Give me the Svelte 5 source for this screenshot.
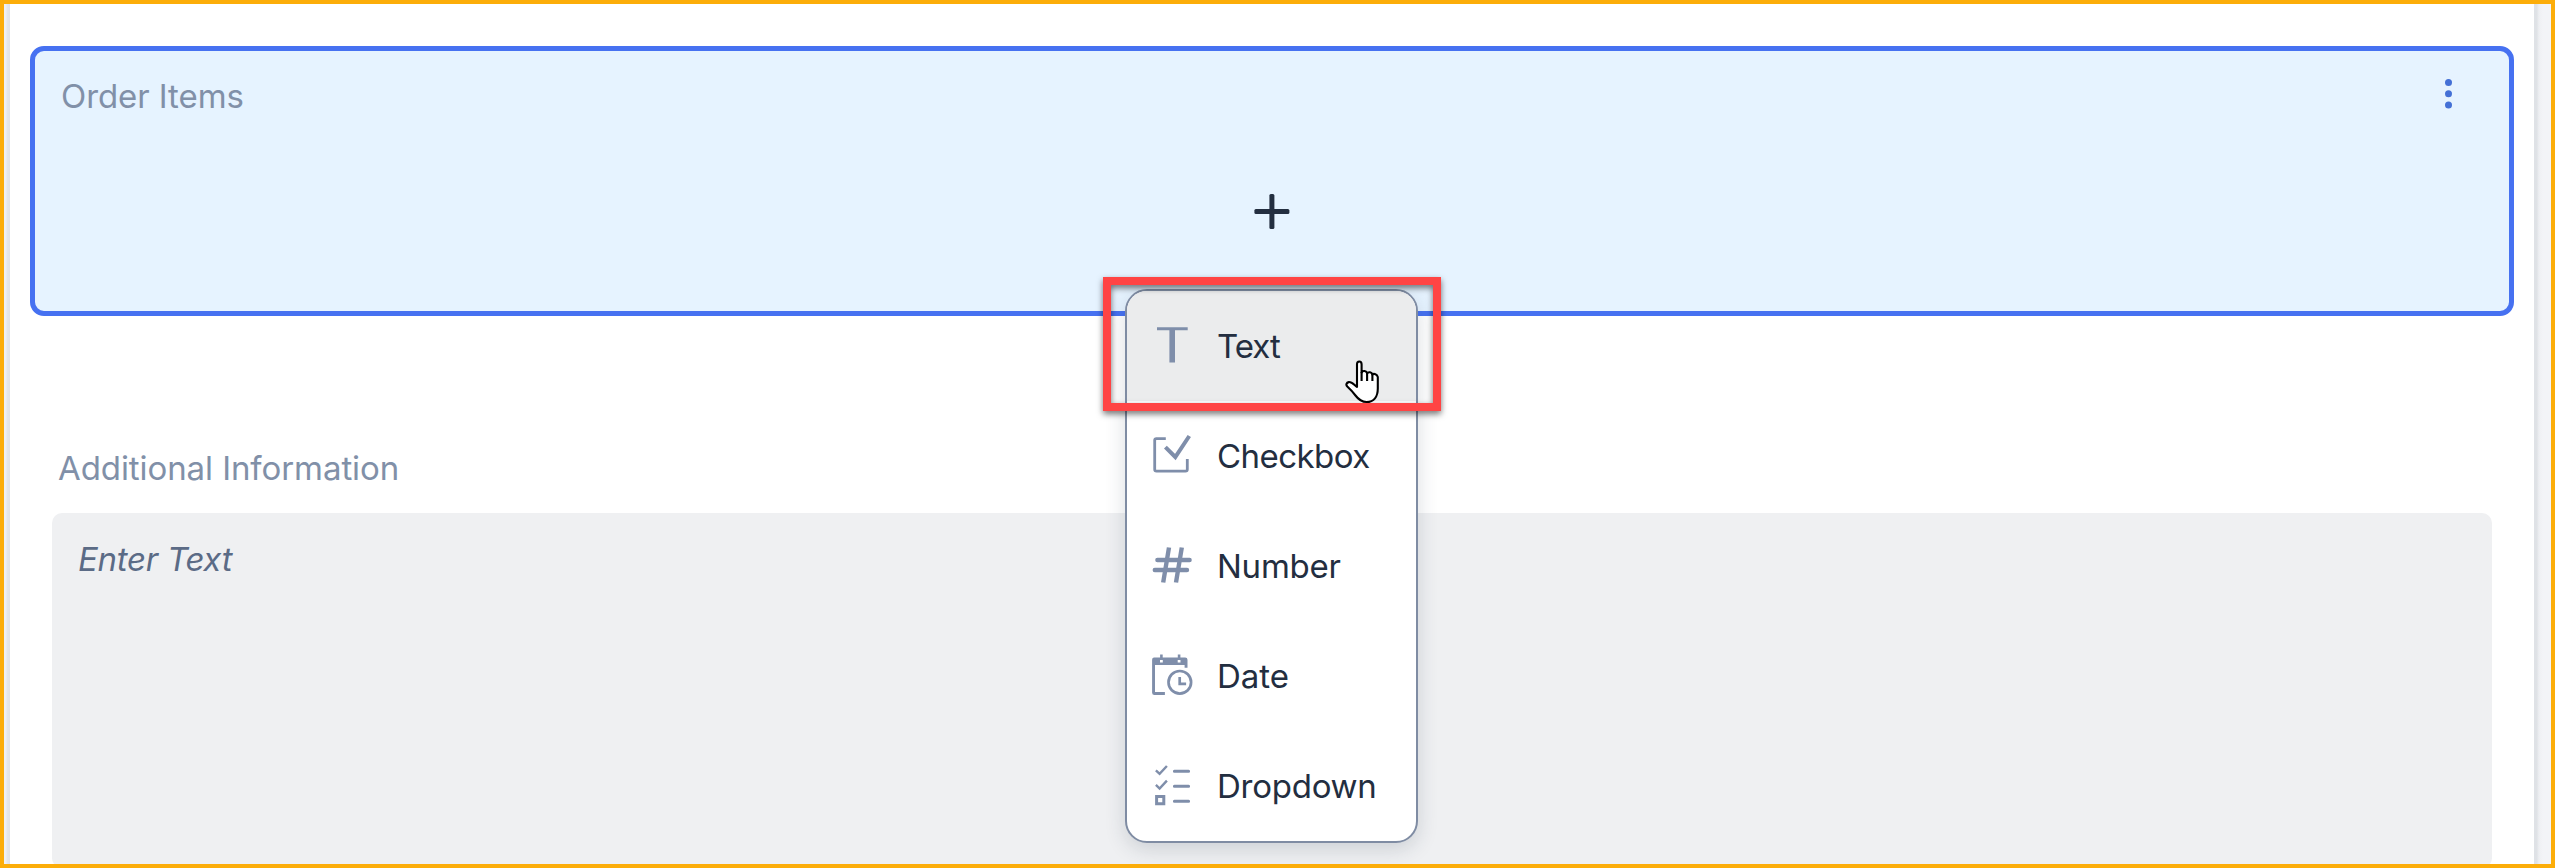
<script>
  const options = [
    { id: 'text', label: 'Text', spacing: -1, active: true },
    { id: 'checkbox', label: 'Checkbox', spacing: -0.55 },
    { id: 'number', label: 'Number', spacing: -0.25 },
    { id: 'date', label: 'Date', spacing: 0 },
    { id: 'dropdown', label: 'Dropdown', spacing: -0.25 }
  ];
</script>

<div class="frame">
  <div class="gutter left"></div>
  <main class="page">
    <section class="card">
      <header>
        <span class="title">Order Items</span>
        <svg class="dots" viewBox="0 0 8 30" aria-hidden="true">
          <circle cx="4.5" cy="3.5" r="3.5" /><circle cx="4.5" cy="14.8" r="3.5" /><circle cx="4.5" cy="26" r="3.5" />
        </svg>
      </header>
      <svg class="plus" viewBox="0 0 36 35" aria-hidden="true">
        <rect x="15.4" y="0" width="5" height="35" rx="1.5" /><rect x="0.4" y="15" width="35" height="5" rx="1.5" />
      </svg>
    </section>
    <section class="info">
      <div class="label">Additional Information</div>
      <div class="area">Enter Text</div>
    </section>
  </main>
  <div class="gutter right"></div>

  <ul class="menu">
    {#each options as o (o.id)}
      <li class:active={o.active}>
        <svg class="icon" viewBox="0 0 44 44" aria-hidden="true">
          {#if o.id === 'text'}
            <path class="fill" d="M7 5.3h30.7v3H25v32.2h-5.6V8.3H7z" />
          {:else if o.id === 'checkbox'}
            <path class="line" stroke-width="2.8" d="M15.8 6.6H6.4Q4.7 6.6 4.7 8.3V37.2Q4.7 39.1 6.5 39.1H35.5Q37.3 39.1 37.3 37.2V27" />
            <path class="line" stroke-width="4" d="M15.4 15.2L25.3 25L39.3 4" />
          {:else if o.id === 'number'}
            <g class="line" stroke-width="4.4">
              <path d="M19 5.5L13.2 40.5M31.8 5.5L26 40.5" />
              <path stroke-linecap="round" d="M7.4 18H39.6M4.8 28H37" />
            </g>
          {:else if o.id === 'date'}
            <g transform="translate(-2.9 -2.3)">
              <path class="fill" d="M7 7.7H13V4.9H15.6V7.7H30.7V4.9H33.3V7.7H38Q40.4 7.7 40.4 10V18H37.5V15.2H7.9V42.4H17.8V45.4H7.4Q5 45.4 5 43V10Q5 7.7 7 7.7ZM12.9 10.4V12.8H15.7V10.4ZM30.6 10.4V12.8H33.4V10.4Z" fill-rule="evenodd" />
              <circle class="line" cx="32.7" cy="32.6" r="11.3" stroke-width="2.7" />
              <path class="line" stroke-width="2.7" d="M32.6 27.4V34.2H39" />
            </g>
          {:else}
            <g transform="translate(-2.6 -1.2)">
              <path class="line" stroke-width="2.4" d="M8.5 9.5L12.2 13.1L19.5 5.2M8.5 24.1L12.2 27.7L19.5 19.8" />
              <path class="line" stroke-width="3" d="M9.2 35.8H16.4V43H9.2Z" />
              <path class="line" stroke-width="3" stroke-linecap="round" d="M27 10.5H41.2M27 25.4H41.2M27 40.4H41.2" />
            </g>
          {/if}
        </svg>
        <span style="letter-spacing: {o.spacing}px">{o.label}</span>
      </li>
    {/each}
  </ul>

  <div class="highlight"></div>
  <svg class="cursor" viewBox="0 0 36 44" aria-hidden="true">
    <path d="M12 27V4.4Q12 1.5 14.3 1.5T16.6 4.4V12.6Q17.5 10.6 19.6 11T22.1 13.4Q23 11.9 25 12.3T27.4 14.6Q28.6 13.5 30.4 14.2T32.8 17V28.5C32.8 36.5 29 42 21.5 42C16 42 13.5 39.5 10.5 35.5C7.5 31.5 5 29 2.3 26.5C.6 24.8 1.4 22.6 3.8 22.1C6.8 21.7 9 24.8 12 27Z" />
    <path d="M16.6 12V21M22.1 13V21M27.4 14V21" />
  </svg>
</div>

<style>
  :global(body) { margin: 0; }
  .frame {
    position: relative;
    display: flex;
    box-sizing: border-box;
    width: 2555px;
    height: 868px;
    border: 4px solid #fcad09;
    overflow: hidden;
    background: #fff;
    font: 400 33px/40px Inter, "Liberation Sans", sans-serif;
    white-space: nowrap;
  }
  .gutter { flex: none; }
  .left { width: 6px; background: linear-gradient(90deg, #eff0f3 0 2px, #e5e7eb 3px, #e1e3e7 6px); }
  .right { width: 17px; background: linear-gradient(90deg, #dfe2e6 0 3px, #e9ebee 4px, #f0f1f4 6px, #f3f4f7 9px); }
  .page { flex: 1; min-width: 0; padding: 42px 20px 0; box-sizing: border-box; }
  .card {
    box-sizing: border-box;
    height: 270px;
    padding: 25px 57px 0 26px;
    border: 5px solid #4671f1;
    border-radius: 14px;
    background: #e6f3ff;
    display: flex;
    flex-direction: column;
  }
  header { display: flex; justify-content: space-between; align-items: flex-start; height: 118px; }
  .title { color: #8190a8; letter-spacing: -0.07px; }
  .dots { width: 8px; height: 30px; margin-top: 3px; fill: #4470d6; }
  .plus { width: 36px; height: 35px; margin-left: 1193px; fill: #232e40; }
  .info { padding: 132px 22px 0; }
  .label { padding-left: 6px; color: #8190a8; letter-spacing: -0.08px; }
  .area {
    height: 329px;
    margin-top: 25px;
    padding: 26px 26px 0;
    border-radius: 10px;
    background: #eff0f2;
    color: #5b6b86;
    font-style: italic;
    letter-spacing: -0.28px;
  }
  .menu {
    position: absolute;
    left: 1121px;
    top: 285px;
    box-sizing: border-box;
    width: 293px;
    height: 554px;
    margin: 0;
    padding: 0;
    list-style: none;
    border: 2px solid #7f8ca3;
    border-radius: 22px;
    overflow: hidden;
    background: #fff;
    box-shadow: 0 6px 20px rgba(34, 53, 72, 0.17);
  }
  li { display: flex; align-items: center; gap: 23px; height: 110px; padding-left: 23px; color: #232e40; }
  .active { background: #ebeced; }
  .icon { width: 44px; height: 44px; overflow: visible; margin-top: -5px; }
  .fill { fill: #7f8eaa; }
  .line { fill: none; stroke: #7f8eaa; }
  .highlight {
    position: absolute;
    left: 1099px;
    top: 273px;
    box-sizing: border-box;
    width: 338px;
    height: 134px;
    border: 8px solid #ff4444;
    filter: drop-shadow(0 3px 3px rgba(0, 0, 0, 0.55));
  }
  .cursor {
    position: absolute;
    left: 1341px;
    top: 356px;
    width: 36px;
    height: 44px;
    fill: #fff;
    stroke: #000;
    stroke-width: 2.1;
    stroke-linejoin: round;
  }
</style>
